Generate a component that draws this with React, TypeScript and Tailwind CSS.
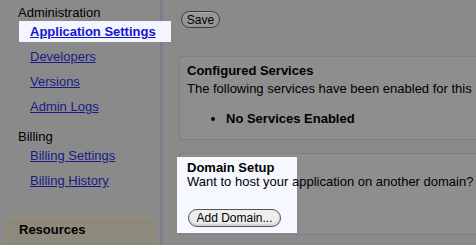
export default function App() {
  const font = { fontFamily: '"Liberation Sans", Arial, sans-serif' };
  const link = 'text-[#1a1a86] underline';
  return (
    <div className="w-[476px] h-[245px] overflow-hidden bg-[#8a8a8b] flex text-[13px] leading-[16px] text-black" style={font}>
      <aside className="w-[163px] shrink-0 border-r-[3px] border-[#7e8089]">
        <div className="pl-[18px] pt-[5px]">Administration</div>
        <div className="relative ml-[19px] w-[152px] h-[21px] bg-[#f3f6fe] z-10">
          <a href="#" className="absolute left-[11px] top-[3px] font-bold text-[#1414d2] underline">
            Application Settings
          </a>
        </div>
        <ul className="pl-[30px]">
          <li className="mt-[7px]"><a href="#" className={link}>Developers</a></li>
          <li className="mt-[9px]"><a href="#" className={link}>Versions</a></li>
          <li className="mt-[9px]"><a href="#" className={link}>Admin Logs</a></li>
        </ul>
        <div className="pl-[18px] mt-[14px]">Billing</div>
        <ul className="pl-[30px]">
          <li className="mt-[3px]"><a href="#" className={link}>Billing Settings</a></li>
          <li className="mt-[9px]"><a href="#" className={link}>Billing History</a></li>
        </ul>
        <div className="mt-[28px] ml-[6px] w-[148px] h-[40px] rounded-[3px] border border-[#979170] bg-[#8d8a7c] pl-[12px] pt-[4px] font-bold">
          Resources
        </div>
      </aside>
      <main className="flex-1 pl-[16px] pt-[11px]">
        <button className="block ml-[2px] w-[39px] h-[17px] rounded-full border border-[#3a3a3a] bg-[#969696] text-[12px] leading-[14px] shadow-[inset_0_1px_0_#aaaaaa]">
          Save
        </button>
        <section className="mt-[28px] h-[84px] rounded-l-[3px] border border-r-0 border-[#7f7f80] bg-[#8e8e8f] pl-[7px] pt-[6px]">
          <h2 className="font-bold">Configured Services</h2>
          <p className="whitespace-nowrap mt-[2px]">The following services have been enabled for this</p>
          <ul className="list-disc pl-[39px] mt-[14px] font-bold">
            <li>No Services Enabled</li>
          </ul>
        </section>
        <section className="relative mt-[13px] h-[82px] rounded-l-[3px] border border-r-0 border-[#7f7f80] bg-[#8e8e8f] pl-[7px] pt-[6px]">
          <div className="absolute left-[-3px] top-[3px] w-[120px] h-[76px] bg-[#f5f8ff]" />
          <h2 className="relative font-bold">Domain Setup</h2>
          <p className="relative whitespace-nowrap mt-[-2px]">Want to host your application on another domain?</p>
          <button className="relative block mt-[19px] ml-[1px] w-[93px] h-[18px] rounded-full border border-[#555555] bg-[#eeeeee] text-[12px] leading-[14px] shadow-[inset_0_-2px_2px_#d0d0d0]">
            Add Domain...
          </button>
        </section>
      </main>
    </div>
  );
}
